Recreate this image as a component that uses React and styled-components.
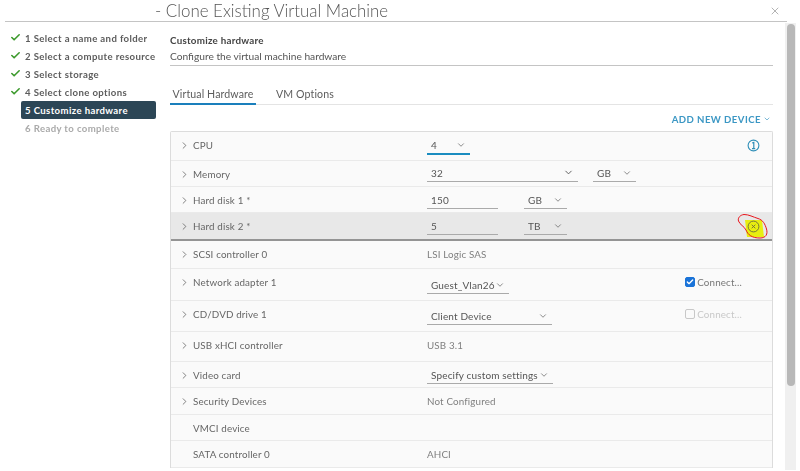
import React from 'react';
import styled, { createGlobalStyle } from 'styled-components';
import { Check, ChevronDown, ChevronRight, X } from 'lucide-react';

const GlobalStyle = createGlobalStyle`
    html, body {
        margin: 0;
        padding: 0;
        background: #fff;
        overflow: hidden;
    }
    body {
        font-family: 'Lato', 'Liberation Sans', sans-serif;
        color: #565656;
    }
`

const Page = styled.div`
    width: 800px;
    height: 471px;
    overflow: hidden;
    filter: blur(0.35px);
    padding: 0 0 0 5px;
    box-sizing: border-box;
`

const Header = styled.header`
    height: 22px;
    width: 782px;
    display: flex;
    align-items: center;
    justify-content: space-between;
    padding: 0 6px 0 150px;
    box-sizing: border-box;
    border-bottom: 1px solid #c4c4c4;
`

const Title = styled.h1`
    margin: -1px 0 0;
    font-size: 16.9px;
    font-weight: 300;
    color: #555;
`

const Body = styled.div`
    display: flex;
    align-items: flex-start;
`

const Sidebar = styled.nav`
    width: 165px;
    flex: none;
    padding-top: 7px;
    display: flex;
    flex-direction: column;
`

const Step = styled.div`
    height: 18px;
    width: 135px;
    margin-left: 16px;
    padding-left: 4px;
    box-sizing: border-box;
    position: relative;
    display: flex;
    align-items: center;
    font-size: 9.6px;
    font-weight: 700;
    letter-spacing: 0.38px;
    white-space: nowrap;
    border-radius: 2px;
    color: ${p => (p.$active ? '#fff' : p.$pending ? '#aaa' : '#5c5c5c')};
    background: ${p => (p.$active ? '#2c4656' : 'transparent')};
`

const StepCheck = styled(Check)`
    position: absolute;
    left: -11px;
    top: 3px;
    color: #3c9a2c;
`

const Main = styled.main`
    width: 603px;
    flex: none;
`

const Intro = styled.div`
    height: 44px;
    padding-top: 11px;
    box-sizing: border-box;
    border-bottom: 1px solid #c4c4c4;
`

const IntroTitle = styled.div`
    font-size: 9.8px;
    font-weight: 700;
    letter-spacing: 0.25px;
    line-height: 14px;
    color: #444;
`

const IntroText = styled.div`
    font-size: 10.2px;
    line-height: 14px;
    margin-top: 2px;
    color: #555;
`

const Tabs = styled.div`
    display: flex;
    height: 38px;
    align-items: flex-end;
    border-bottom: 1px solid #e4e4e4;
`

const Tab = styled.div`
    height: 20px;
    padding-top: 3px;
    margin-right: 18px;
    width: ${p => p.$width}px;
    display: flex;
    justify-content: center;
    white-space: nowrap;
    font-size: 10.6px;
    letter-spacing: 0.1px;
    color: #5c5c5c;
    box-sizing: border-box;
    border-bottom: 2px solid ${p => (p.$active ? '#1a7fbc' : 'transparent')};
    margin-bottom: -1px;
`

const Actions = styled.div`
    height: 26px;
    padding: 2px 2px 0 0;
    box-sizing: border-box;
    display: flex;
    align-items: center;
    justify-content: flex-end;
    gap: 2px;
    font-size: 9.6px;
    font-weight: 700;
    letter-spacing: 0.45px;
    color: #3b97c4;
`

const Table = styled.section`
    border: 1px solid #dcdcdc;
    border-bottom: none;
    border-radius: 2px 2px 0 0;
    background: #fafafa;
`

const Row = styled.div`
    height: ${p => p.$height}px;
    box-sizing: border-box;
    display: grid;
    grid-template-columns: 256px 1fr auto;
    align-items: start;
    background: ${p => (p.$selected ? '#e8e8e8' : '#fafafa')};
    border-bottom: ${p => (p.$selected ? '2px solid #949494' : '1px solid #eaeaea')};
    font-size: 9.8px;
    letter-spacing: 0.15px;
`

const Label = styled.div`
    display: flex;
    align-items: center;
    height: 26px;
    padding-left: 8px;
    color: #666;
`

const Caret = styled.span`
    width: 14px;
    flex: none;
    display: flex;
    color: #555;
`

const Plain = styled.div`
    height: 26px;
    display: flex;
    align-items: center;
    color: #808080;
`

const Controls = styled.div`
    display: flex;
    gap: ${p => p.$gap || 0}px;
    margin-top: ${p => p.$drop || 4}px;
`

const Field = styled.div`
    width: ${p => p.$width}px;
    height: 18px;
    padding: 0 4px;
    box-sizing: border-box;
    display: flex;
    align-items: center;
    justify-content: space-between;
    white-space: nowrap;
    font-size: 10px;
    color: #555;
    border-bottom: ${p => (p.$focus ? '1px solid #1a8cc0' : '1px solid #aaa')};
    box-shadow: ${p => (p.$focus ? '0 1px 0 #1a8cc0' : 'none')};
`

const End = styled.div`
    position: relative;
    display: flex;
    align-items: center;
    height: 26px;
    padding-right: ${p => p.$pad}px;
`

const Connect = styled.label`
    display: flex;
    align-items: center;
    gap: 2px;
    font-size: 9.8px;
    color: ${p => (p.$disabled ? '#c8c8c8' : '#777')};
`

const Box = styled.span`
    width: 10px;
    height: 10px;
    border-radius: 2px;
    box-sizing: border-box;
    display: flex;
    align-items: center;
    justify-content: center;
    color: #fff;
    background: ${p => (p.$on ? '#1a73d8' : '#fafafa')};
    border: 1px solid ${p => (p.$on ? '#1a73d8' : '#c8c8c8')};
`

const Markup = styled.svg`
    position: absolute;
    left: -9px;
    top: 1px;
    overflow: visible;
`

const IconOnTop = styled.svg`
    position: relative;
`

const Scrollbar = styled.div`
    width: 11px;
    height: 447px;
    margin: 1px 0 0 12px;
    flex: none;
    background: #f0f0f0;
    display: flex;
    justify-content: center;
`

const Thumb = styled.div`
    width: 8px;
    height: 362px;
    margin-top: 1px;
    background: #b8b8b8;
    border-radius: 4px;
`

const steps = [
    '1 Select a name and folder',
    '2 Select a compute resource',
    '3 Select storage',
    '4 Select clone options',
]

const Select = ({ width, value, focus, strong }) => (
    <Field $width={width} $focus={focus}>
        <span>{value}</span>
        <ChevronDown size={strong ? 11 : 10} strokeWidth={strong ? 2 : 1.6} />
    </Field>
)

const Name = ({ text, expandable = true }) => (
    <Label>
        <Caret>{expandable && <ChevronRight size={11} strokeWidth={1.6} />}</Caret>
        {text}
    </Label>
)

const InfoIcon = () => (
    <svg width="13" height="13" viewBox="0 0 13 13" fill="none" stroke="#2f8fb8">
        <circle cx="6.5" cy="6.5" r="5.4" strokeWidth="1.1" />
        <path d="M5.2 4 L6.8 3.4 V9.4 M5 9.6 H8.2" strokeWidth="1.2" />
    </svg>
)

const RemoveIcon = () => (
    <IconOnTop width="13" height="13" viewBox="0 0 13 13" fill="none" stroke="#6b6b3a">
        <circle cx="6.5" cy="6.5" r="5.4" strokeWidth="0.9" />
        <path d="M4.7 4.7 L8.3 8.3 M8.3 4.7 L4.7 8.3" strokeWidth="0.9" />
    </IconOnTop>
)

// yellow highlight and the red pen loop someone drew on top of the screenshot
const Annotation = () => (
    <Markup width="30" height="26" viewBox="0 0 30 26" fill="none">
        <path d="M7 6 H24 L26 23 H9 Z" fill="#e8ee10" />
        <path
            d="M6 0.5 C2 1 -0.5 4 0.5 7 C2 11 6 12 8 16 C10 21 14 24 22 24 C28 24 30 20 28.5 15 C27 10 25 6 20 4.5 C15 3 11 0.5 6 0.5 Z"
            stroke="#e8141c"
            strokeWidth="1"
        />
    </Markup>
)

const App = () => (
    <Page>
        <GlobalStyle />
        <Header>
            <Title>- Clone Existing Virtual Machine</Title>
            <X size={12} strokeWidth={1} color="#666" />
        </Header>
        <Body>
            <Sidebar>
                {steps.map(step => (
                    <Step key={step}>
                        <StepCheck size={11} strokeWidth={3.5} />
                        {step}
                    </Step>
                ))}
                <Step $active>5 Customize hardware</Step>
                <Step $pending>6 Ready to complete</Step>
            </Sidebar>
            <Main>
                <Intro>
                    <IntroTitle>Customize hardware</IntroTitle>
                    <IntroText>Configure the virtual machine hardware</IntroText>
                </Intro>
                <Tabs>
                    <Tab $active $width={86}>Virtual Hardware</Tab>
                    <Tab $width={62}>VM Options</Tab>
                </Tabs>
                <Actions>
                    ADD NEW DEVICE
                    <ChevronDown size={8} strokeWidth={2} />
                </Actions>
                <Table>
                    <Row $height={29}>
                        <Name text="CPU" />
                        <Controls><Select width={43} value="4" focus /></Controls>
                        <End $pad={12}><InfoIcon /></End>
                    </Row>
                    <Row $height={26}>
                        <Name text="Memory" />
                        <Controls $gap={15} $drop={3}>
                            <Select width={151} value="32" strong />
                            <Select width={43} value="GB" />
                        </Controls>
                    </Row>
                    <Row $height={26}>
                        <Name text="Hard disk 1 *" />
                        <Controls $gap={26}>
                            <Field $width={71}>150</Field>
                            <Select width={43} value="GB" />
                        </Controls>
                    </Row>
                    <Row $height={28} $selected>
                        <Name text="Hard disk 2 *" />
                        <Controls $gap={26} $drop={4}>
                            <Field $width={71}>5</Field>
                            <Select width={43} value="TB" />
                        </Controls>
                        <End $pad={12}>
                            <Annotation />
                            <RemoveIcon />
                        </End>
                    </Row>
                    <Row $height={28}>
                        <Name text="SCSI controller 0" />
                        <Plain>LSI Logic SAS</Plain>
                    </Row>
                    <Row $height={32}>
                        <Name text="Network adapter 1" />
                        <Controls $drop={7}><Select width={82} value="Guest_Vlan26" /></Controls>
                        <End $pad={30}>
                            <Connect>
                                <Box $on><Check size={8} strokeWidth={4} /></Box>
                                Connect...
                            </Connect>
                        </End>
                    </Row>
                    <Row $height={31}>
                        <Name text="CD/DVD drive 1" />
                        <Controls $drop={6}><Select width={125} value="Client Device" /></Controls>
                        <End $pad={30}>
                            <Connect $disabled>
                                <Box />
                                Connect...
                            </Connect>
                        </End>
                    </Row>
                    <Row $height={30}>
                        <Name text="USB xHCI controller" />
                        <Plain>USB 3.1</Plain>
                    </Row>
                    <Row $height={26}>
                        <Name text="Video card" />
                        <Controls><Select width={126} value="Specify custom settings" /></Controls>
                    </Row>
                    <Row $height={27}>
                        <Name text="Security Devices" />
                        <Plain>Not Configured</Plain>
                    </Row>
                    <Row $height={26}>
                        <Name text="VMCI device" expandable={false} />
                    </Row>
                    <Row $height={27}>
                        <Name text="SATA controller 0" expandable={false} />
                        <Plain>AHCI</Plain>
                    </Row>
                </Table>
            </Main>
            <Scrollbar><Thumb /></Scrollbar>
        </Body>
    </Page>
);

export default App;
